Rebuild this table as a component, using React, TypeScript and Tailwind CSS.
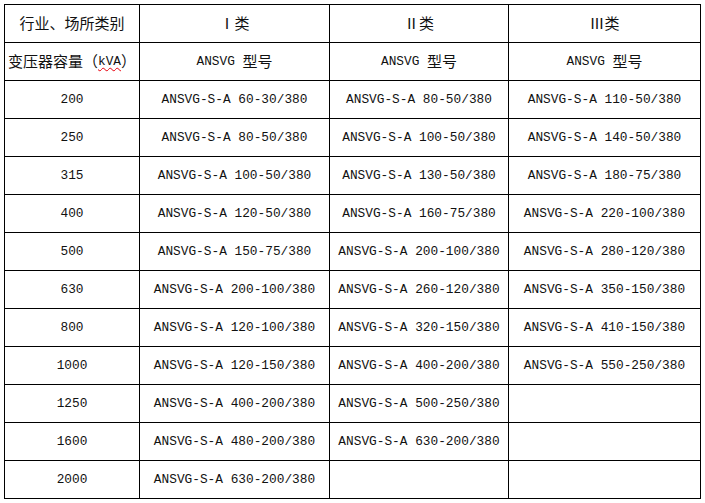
import { Fragment } from 'react';

const rows: [string, string, string, string][] = [
  ['200', '60-30', '80-50', '110-50'],
  ['250', '80-50', '100-50', '140-50'],
  ['315', '100-50', '130-50', '180-75'],
  ['400', '120-50', '160-75', '220-100'],
  ['500', '150-75', '200-100', '280-120'],
  ['630', '200-100', '260-120', '350-150'],
  ['800', '120-100', '320-150', '410-150'],
  ['1000', '120-150', '400-200', '550-250'],
  ['1250', '400-200', '500-250', ''],
  ['1600', '480-200', '630-200', ''],
  ['2000', '630-200', '', ''],
];

const cjk = "font-['Noto_Sans_CJK_SC',sans-serif] text-[15px]";

const Cell = ({ children }: { children?: React.ReactNode }) => (
  <div className="bg-white flex items-center justify-center whitespace-pre">{children}</div>
);

const model = (v: string) => (v ? `ANSVG-S-A ${v}/380` : '');

export default function App() {
  return (
    <div className="min-h-screen bg-white pl-[4px] pt-[4px] text-[#111] font-['Liberation_Mono',monospace] text-[12.8px]">
      <div className="inline-grid grid-cols-[134px_189px_178px_191px] auto-rows-[37px] gap-px bg-black p-px">
        {/* header rows */}
        <Cell>
          <span className={cjk}>行业、场所类别</span>
        </Cell>
        <Cell>
          <span className={cjk}>Ⅰ类</span>
        </Cell>
        <Cell>
          <span className={cjk}>Ⅱ类</span>
        </Cell>
        <Cell>
          <span className={cjk}>Ⅲ类</span>
        </Cell>

        <Cell>
          <span className={cjk}>变压器容量（</span>
          <span className="underline decoration-wavy decoration-red-600 decoration-1 underline-offset-2">kVA</span>
          <span className={cjk}>）</span>
        </Cell>
        {[0, 1, 2].map((i) => (
          <Cell key={i}>
            ANSVG <span className={cjk}>型号</span>
          </Cell>
        ))}

        {/* data rows */}
        {rows.map(([kva, a, b, c]) => (
          <Fragment key={kva}>
            <Cell>{kva}</Cell>
            <Cell>{model(a)}</Cell>
            <Cell>{model(b)}</Cell>
            <Cell>{model(c)}</Cell>
          </Fragment>
        ))}
      </div>
    </div>
  );
}
